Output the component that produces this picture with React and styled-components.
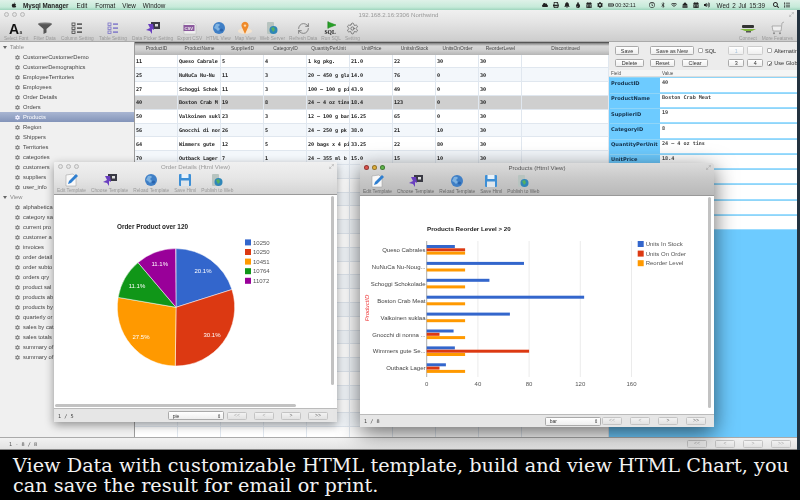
import React from 'react';
import styled, { createGlobalStyle } from 'styled-components';
import { FaCog, FaApple, FaBell, FaPrint, FaBluetoothB, FaWifi, FaEject, FaVolumeUp, FaSearch, FaList, FaRegClock, FaTint, FaCalendarAlt, FaBatteryFull, FaCloud } from 'react-icons/fa';
import { RefreshCw, Settings, Maximize2 } from 'lucide-react';

const GlobalStyle = createGlobalStyle`
  html, body { margin: 0; padding: 0; background: #000; }
  * { box-sizing: border-box; }
`;

const Screen = styled.div`
  width: 800px;
  height: 500px;
  overflow: hidden;
  display: flex;
  flex-direction: column;
  font-family: "Liberation Sans", Arial, sans-serif;
  position: relative;
`;

const MenuBar = styled.div`
  height: 10px;
  flex: none;
  display: flex;
  align-items: center;
  padding-left: 11px;
  font-size: 6.3px;
  color: #222;
  background: linear-gradient(#dff1e8, #c6ead9 70%, #9fd5bd);
  filter: blur(0.3px);
`;

const AppleMark = styled.span`
  display: flex;
  font-size: 6px;
  margin-right: 6px;
`;

const MenuItem = styled.span`
  margin-right: ${p => p.$gap}px;
  font-weight: ${p => (p.$bold ? 700 : 400)};
`;

const StatusArea = styled.div`
  margin-left: auto;
  display: flex;
  align-items: center;
  gap: 5px;
  padding-right: 10px;
  font-size: 6.3px;
  color: #222;
  svg { width: 6px; height: 6px; flex: none; }
`;

const ClockText = styled.span`
  margin-left: -4px;
  margin-right: 8px;
  font-size: 5.3px;
`;

const DateText = styled.span`
  margin: 0 3px 0 2px;
  word-spacing: 1px;
`;

const Desktop = styled.div`
  flex: none;
  height: 440px;
  position: relative;
  background: #23323f;
  filter: blur(0.3px);
`;

const MainWindow = styled.div`
  width: 797px;
  height: 440px;
  display: flex;
  flex-direction: column;
  background: #e8e8e8;
`;

const TitleBar = styled.div`
  height: 9px;
  flex: none;
  position: relative;
  display: flex;
  align-items: center;
  justify-content: center;
  font-size: 6.1px;
  color: ${p => (p.$active ? '#555' : '#999')};
`;

const Lights = styled.div`
  position: absolute;
  left: ${p => p.$left}px;
  top: 2px;
  display: flex;
  gap: 3px;
`;

const Light = styled.i`
  width: 5px;
  height: 5px;
  border-radius: 50%;
  background: ${p => p.$color || '#e4e4e4'};
  border: 0.5px solid ${p => (p.$color ? 'rgba(0,0,0,.35)' : '#b8b8b8')};
`;

const Resize = styled.span`
  position: absolute;
  right: 3px;
  top: 2px;
  display: flex;
  color: #9a9a9a;
`;

const TopChrome = styled.div`
  flex: none;
  height: 32px;
  background: linear-gradient(#f0f0f0, #e4e4e4 40%, #cdcdcd);
  border-bottom: 1px solid #aaa;
`;

const Toolbar = styled.div`
  height: 23px;
  display: flex;
  align-items: flex-end;
  gap: ${p => p.$gap}px;
  padding: 0 ${p => p.$pad}px 1px;
`;

const ToolItem = styled.div`
  display: flex;
  flex-direction: column;
  align-items: center;
  gap: 1px;
  margin-left: ${p => p.$ml || 0}px;
  font-size: 4.8px;
  white-space: nowrap;
  color: ${p => (p.$active ? '#666' : '#9a9a9a')};
  svg { display: block; }
`;

const ToolSpacer = styled.div`
  margin-left: auto;
`;

const Body = styled.div`
  flex: 1;
  min-height: 0;
  display: flex;
`;

const Sidebar = styled.div`
  width: 135px;
  flex: none;
  background: #f0f0f0;
  border-right: 1px solid #9c9c9c;
  font-size: 5.8px;
  color: #444;
`;

const TreeHead = styled.div`
  height: 10px;
  display: flex;
  align-items: center;
  padding-left: 3px;
  gap: 3px;
  color: #888;
  &::before {
    content: '';
    border-left: 2px solid transparent;
    border-right: 2px solid transparent;
    border-top: 3px solid #666;
  }
`;

const TreeRow = styled.div`
  height: 10px;
  display: flex;
  align-items: center;
  gap: 3px;
  padding-left: 15px;
  color: ${p => (p.$selected ? '#fff' : '#444')};
  background: ${p => (p.$selected ? 'linear-gradient(#a9b6d2, #8394b9)' : 'transparent')};
  svg { width: 5px; height: 5px; color: ${p => (p.$selected ? '#eef' : '#8a8a8a')}; }
`;

const Grid = styled.div`
  width: 474px;
  flex: none;
  overflow: hidden;
  background: #fff;
`;

const GridHead = styled.div`
  height: 12.6px;
  display: grid;
  grid-template-columns: repeat(9, 43px) 87px;
  border-top: 1px solid #555;
  background: linear-gradient(#7d7d7d, #d8d8d8 25%, #d0d0d0 60%, #b5b5b5);
  font-size: 4.9px;
  color: #444;
`;

const HeadCell = styled.div`
  display: flex;
  align-items: center;
  justify-content: center;
`;

const GridRow = styled.div`
  height: 13.8px;
  display: grid;
  grid-template-columns: repeat(9, 43px) 87px;
  background: ${p => (p.$selected ? '#cfcfcf' : p.$odd ? '#f3f7fb' : '#fff')};
  border-bottom: 1px solid #e0e7ef;
  font: 700 5.1px "DejaVu Sans Mono", monospace;
  letter-spacing: -0.08px;
  color: #222;
`;

const GridCell = styled.div`
  display: flex;
  align-items: center;
  padding-left: 1px;
  overflow: hidden;
  white-space: nowrap;
  border-right: 1px solid #e0e7ef;
`;

const EditPanel = styled.div`
  flex: 1;
  min-width: 0;
  display: flex;
  flex-direction: column;
  background: #6dcbff;
  overflow: hidden;
  padding-left: 1px;
`;

const ButtonBar = styled.div`
  height: 28.4px;
  flex: none;
  margin-left: -1px;
  background: #ececec;
  display: flex;
  padding: 4px 0 0 6px;
  white-space: nowrap;
`;

const ButtonGroup = styled.div`
  display: flex;
  flex-direction: column;
  gap: 3.5px;
`;

const ButtonRow = styled.div`
  display: flex;
  align-items: center;
  height: 9px;
`;

const PushButton = styled.div`
  width: ${p => p.$w}px;
  height: 8.5px;
  margin-left: ${p => p.$ml || 0}px;
  margin-right: ${p => p.$mr || 0}px;
  flex: none;
  display: flex;
  align-items: center;
  justify-content: center;
  border: 0.5px solid ${p => (p.$off ? '#ccc' : '#aaa')};
  border-radius: 1.5px;
  background: linear-gradient(#fff, #eee);
  font-size: 5.4px;
  color: ${p => (p.$off ? '#a9c4dd' : '#333')};
`;

const Check = styled.span`
  width: 5px;
  height: 5px;
  margin-left: ${p => p.$ml || 0}px;
  margin-right: 2px;
  flex: none;
  border: 0.5px solid #aaa;
  border-radius: 1px;
  background: #fff;
  position: relative;
  font-size: 6px;
  line-height: 4px;
  color: #222;
`;

const CheckLabel = styled.span`
  font-size: 5.6px;
  color: #333;
`;

const Divider = styled.div`
  width: 1px;
  height: 22px;
  margin: 0 7px 0 5px;
  background: #7ba6cc;
`;

const FieldHead = styled.div`
  height: 7px;
  flex: none;
  margin-left: -1px;
  display: flex;
  align-items: center;
  background: #f5f5f5;
  border-bottom: 1px solid #ddd;
  font-size: 4.6px;
  color: #555;
`;

const FieldTitle = styled.span`
  width: ${p => p.$w}px;
  padding-left: 2px;
`;

const FieldRow = styled.div`
  height: 15.3px;
  flex: none;
  display: flex;
  border-top: 0.5px solid #8fd5f8;
`;

const FieldName = styled.div`
  width: 50px;
  flex: none;
  padding: 1.6px 0 0 1px;
  font: 700 5.1px "DejaVu Sans", sans-serif;
  color: #14304a;
  white-space: nowrap;
`;

const FieldValue = styled.div`
  flex: 1;
  background: #fff;
  padding: 0.4px 0 0 2px;
  font: 700 5.1px "DejaVu Sans Mono", monospace;
  color: #444;
  border-bottom: 0.5px solid #9bdcff;
`;

const StatusBar = styled.div`
  flex: none;
  height: 13px;
  display: flex;
  align-items: center;
  padding: 0 6px 0 9px;
  background: linear-gradient(#f2f2f2, #e3e3e3);
  border-top: 1px solid #aaa;
  border-bottom: 1px solid #888;
  font: 5.2px "DejaVu Sans Mono", monospace;
  color: #555;
`;

const Pager = styled.div`
  margin-left: auto;
  display: flex;
  gap: ${p => p.$gap}px;
`;

const PageButton = styled.div`
  width: ${p => p.$w || 20}px;
  height: 8px;
  display: flex;
  align-items: center;
  justify-content: center;
  border: 0.5px solid #c4c4c4;
  border-radius: 1.5px;
  background: linear-gradient(#f2f2f2, #e2e2e2);
  font: 5px "Liberation Mono", monospace;
  color: ${p => (p.$on ? '#666' : '#aaa')};
`;

const FloatWindow = styled.div`
  position: absolute;
  left: ${p => p.$x}px;
  top: ${p => p.$y}px;
  width: ${p => p.$w}px;
  height: ${p => p.$h}px;
  display: flex;
  flex-direction: column;
  border-radius: 2px 2px 1px 1px;
  overflow: hidden;
  background: #fff;
  box-shadow: ${p => (p.$active ? '0 6px 22px rgba(0,0,0,.6)' : '0 3px 10px rgba(0,0,0,.4)')};
`;

const FloatChrome = styled.div`
  flex: none;
  height: 33px;
  background: ${p => (p.$active ? 'linear-gradient(#dcdcdc, #c8c8c8 50%, #b9b9b9)' : 'linear-gradient(#f0f0f0, #e6e6e6 50%, #d4d4d4)')};
  border-bottom: 0.5px solid #999;
`;

const ChartArea = styled.div`
  flex: 1;
  min-height: 0;
  position: relative;
  overflow: hidden;
  svg { display: block; }
`;

const ScrollV = styled.div`
  position: absolute;
  right: 3px;
  top: 1px;
  bottom: ${p => p.$bottom}px;
  width: 3px;
  border-radius: 2px;
  background: #c2c2c2;
`;

const ScrollH = styled.div`
  position: absolute;
  left: 1px;
  bottom: 1.5px;
  height: 3px;
  width: ${p => p.$w}px;
  border-radius: 2px;
  background: #c2c2c2;
`;

const FloatFooter = styled.div`
  flex: none;
  height: ${p => p.$h}px;
  display: flex;
  align-items: center;
  padding: 0 ${p => p.$pr}px 0 4px;
  background: #e6e6e6;
  border-top: 0.5px solid #bbb;
  font: 5.2px "DejaVu Sans Mono", monospace;
  color: #444;
`;

const SelectBox = styled.div`
  width: 56px;
  height: 9px;
  margin-left: ${p => p.$ml}px;
  display: flex;
  align-items: center;
  justify-content: space-between;
  padding: 0 2px 0 4px;
  border: 0.5px solid #aaa;
  border-radius: 1.5px;
  background: linear-gradient(#fff, #eee);
  font: 5px "Liberation Sans", sans-serif;
  color: #333;
`;

const Caption = styled.div`
  flex: none;
  height: 50px;
  background: #000;
  color: #f2f2f2;
  padding: 6px 0 0 13px;
  font: 19.25px/20px "DejaVu Serif", serif;
  white-space: pre;
`;

/* toolbar drawings, all on a 16 x 14 box */
const Ico = ({ children, w = 16, h = 14 }) => (
  <svg width={w} height={h} viewBox="0 0 16 14">{children}</svg>
);

const FontIcon = () => (
  <Ico>
    <text x="1" y="12.5" fontFamily="Liberation Sans" fontWeight="700" fontSize="14" fill="#111">A</text>
    <text x="11.4" y="12.5" fontFamily="Liberation Sans" fontWeight="700" fontSize="4.6" fill="#333">a</text>
  </Ico>
);
const FilterIcon = () => (
  <Ico>
    <ellipse cx="8" cy="3" rx="7" ry="1.6" fill="#777" />
    <path d="M1 3.2 L6.5 8 V13 L9.5 11.6 V8 L15 3.2 Z" fill="#555" />
  </Ico>
);
const ListIcon = ({ c }) => (
  <Ico>
    {[2, 6, 10].map(y => (
      <g key={y}>
        <rect x="3" y={y} width="3" height="2.4" fill="none" stroke={c} strokeWidth=".8" />
        <rect x="8" y={y + 0.4} width="5" height="1.4" fill={c} />
      </g>
    ))}
  </Ico>
);
const PickerIcon = () => (
  <Ico>
    <rect x="6" y="1" width="9" height="7" fill="#3a3a44" />
    <rect x="10" y="3" width="3" height="2.5" fill="#ddd" />
    <path d="M3 3 H8 L9 9 L7 8 L7 13 L5 10 L1 9 L5 7 Z" fill="#6a3fc0" />
  </Ico>
);
const CsvIcon = () => (
  <Ico>
    <path d="M2 2 H12 L14 4 V13 H2 Z" fill="#eee" stroke="#aaa" strokeWidth=".4" />
    <rect x="1.5" y="4" width="11" height="6" fill="#8c5a9e" />
    <text x="2.5" y="8.8" fontFamily="Liberation Sans" fontWeight="700" fontSize="4.2" fill="#eee">CSV</text>
  </Ico>
);
const GlobeIcon = () => (
  <Ico>
    <circle cx="8" cy="7" r="6" fill="#3f7fc6" />
    <path d="M5 3 Q8 2 9 4 L7 6 L9 8 L7 10 L5 8 L3 7 Z" fill="#7fb2e0" />
    <circle cx="10.5" cy="9" r="1.6" fill="#2a64ad" />
  </Ico>
);
const MapIcon = () => (
  <Ico>
    <ellipse cx="8" cy="10" rx="7" ry="3" fill="#f3e3cf" />
    <path d="M8 13 L4.8 6 A3.6 3.6 0 1 1 11.2 6 Z" fill="#ef8a2a" />
    <circle cx="8" cy="4.6" r="1.2" fill="#ffd9a8" />
  </Ico>
);
const ServerIcon = () => (
  <Ico>
    <rect x="3" y="1" width="7" height="12" rx="1" fill="#b8c4c0" />
    <circle cx="9.5" cy="9" r="4" fill="#2f86b8" />
    <path d="M7 7 L10 6 L11 9 L9 11 Z" fill="#55b060" />
  </Ico>
);
const RunIcon = () => (
  <Ico>
    <path d="M5 0 V8 M5 1 L13 4 L5 7 Z" fill="#27a127" stroke="#1e8c1e" strokeWidth=".6" />
    <text x="1.5" y="13" fontFamily="Liberation Serif" fontWeight="700" fontSize="5.6" fill="#111">SQL</text>
  </Ico>
);
const ConnectIcon = () => (
  <Ico>
    <rect x="2" y="4" width="12" height="3" rx="1" fill="#333" />
    <path d="M0 8 H16 L12 10 H5 Z" fill="#7fb63c" />
    <rect x="6" y="10" width="5" height="1.5" fill="#555" />
  </Ico>
);
const CartIcon = () => (
  <Ico>
    <path d="M15 1 L13 2 L12 10 H4 L3 5 H12" fill="#efefef" stroke="#888" strokeWidth=".6" />
    <circle cx="5" cy="12.2" r="1" fill="#888" />
    <circle cx="11" cy="12.2" r="1" fill="#888" />
  </Ico>
);
const EditIcon = () => (
  <Ico>
    <path d="M3 2 L10 1 L13 4 V13 H3 Z" fill="#f8f8f8" stroke="#999" strokeWidth=".5" />
    <path d="M5 11 L6 8 L13 1 L15 3 L8 10 Z" fill="#2f7fd0" />
  </Ico>
);
const SaveIcon = () => (
  <Ico>
    <rect x="2" y="1" width="12" height="12" rx="1" fill="#3d8fd6" />
    <rect x="4.5" y="1" width="7" height="4" fill="#e8f2fa" />
    <rect x="4" y="7.5" width="8" height="5.5" fill="#dfe6ec" />
  </Ico>
);

const mainTools = [
  ['Select Font', FontIcon, 0],
  ['Filter Data', FilterIcon, 1.3],
  ['Column Setting', () => <ListIcon c="#444" />, 1.3],
  ['Table Setting', () => <ListIcon c="#7a72c8" />, 1.3],
  ['Data Picker Setting', PickerIcon, 1.3],
  ['Export CSV', CsvIcon, 0],
  ['HTML View', GlobeIcon, 0],
  ['Map View', MapIcon, 0],
  ['Web Server', ServerIcon, 0],
  ['Refresh Data', () => <RefreshCw size={13} color="#777" strokeWidth={1.6} />, 0],
  ['Run SQL', RunIcon, 0],
  ['Setting', () => <Settings size={13} color="#555" strokeWidth={1.3} />, 0],
];

const templateTools = [
  ['Edit Template', EditIcon],
  ['Choose Template', PickerIcon],
  ['Reload Template', GlobeIcon],
  ['Save Html', SaveIcon],
  ['Publish to Web', ServerIcon],
];

const tables = ['CustomerCustomerDemo', 'CustomerDemographics', 'EmployeeTerritories', 'Employees', 'Order Details', 'Orders', 'Products', 'Region', 'Shippers', 'Territories', 'categories', 'customers', 'suppliers', 'user_info'];
const views = ['alphabetica', 'category sa', 'current pro', 'customer a', 'invoices', 'order detail', 'order subto', 'orders qry', 'product sal', 'products ab', 'products by', 'quarterly or', 'sales by cat', 'sales totals', 'summary of', 'summary of'];

const columns = ['ProductID', 'ProductName', 'SupplierID', 'CategoryID', 'QuantityPerUnit', 'UnitPrice', 'UnitsInStock', 'UnitsOnOrder', 'ReorderLevel', 'Discontinued'];
// cell text as far as the narrow columns show it
const products = [
  ['11', 'Queso Cabrale', '5', '4', '1 kg pkg.', '21.0', '22', '30', '30'],
  ['25', 'NuNuCa Nu-Nu', '11', '3', '20 – 450 g gla', '14.0', '76', '0', '30'],
  ['27', 'Schoggi Schok', '11', '3', '100 – 100 g pi', '43.9', '49', '0', '30'],
  ['40', 'Boston Crab M', '19', '8', '24 – 4 oz tins', '18.4', '123', '0', '30'],
  ['50', 'Valkoinen sukl', '23', '3', '12 – 100 g bar', '16.25', '65', '0', '30'],
  ['56', 'Gnocchi di nor', '26', '5', '24 – 250 g pk', '38.0', '21', '10', '30'],
  ['64', 'Wimmers gute', '12', '5', '20 bags x 4 pi', '33.25', '22', '80', '30'],
  ['70', 'Outback Lager', '7', '1', '24 – 355 ml b', '15.0', '15', '10', '30'],
];
const fields = [['ProductID', '40'], ['ProductName', 'Boston Crab Meat'], ['SupplierID', '19'], ['CategoryID', '8'], ['QuantityPerUnit', '24 – 4 oz tins'], ['UnitPrice', '18.4'], ['UnitsInStock', '123'], ['UnitsOnOrder', '0'], ['ReorderLevel', '30'], ['Discontinued', '']];

const pieSlices = [
  { pct: 20.1, color: '#3366cc', lx: 203, ly: 273 },
  { pct: 30.1, color: '#dc3912', lx: 212, ly: 336.5 },
  { pct: 27.5, color: '#ff9900', lx: 141, ly: 339 },
  { pct: 11.1, color: '#109618', lx: 137, ly: 288 },
  { pct: 11.1, color: '#990099', lx: 159.7, ly: 266 },
];
const pieLegend = ['10250', '10250', '10451', '10764', '11072'];

function slicePath(cx, cy, r, from, to) {
  const a = (from / 100) * 2 * Math.PI;
  const b = (to / 100) * 2 * Math.PI;
  const large = to - from > 50 ? 1 : 0;
  return `M${cx} ${cy} L${cx + r * Math.sin(a)} ${cy - r * Math.cos(a)} A${r} ${r} 0 ${large} 1 ${cx + r * Math.sin(b)} ${cy - r * Math.cos(b)} Z`;
}

const PieChart = () => {
  let at = 0;
  return (
    <svg width="283" height="213" viewBox="54 195 283 213" fontFamily="Liberation Sans">
      <text x="117" y="229" fontSize="6.4" fontWeight="700" fill="#222">Order Product over 120</text>
      {pieSlices.map(s => {
        const d = slicePath(176, 307.3, 58.7, at, at + s.pct);
        at += s.pct;
        return <path key={s.color} d={d} fill={s.color} stroke="#fff" strokeWidth=".5" />;
      })}
      {pieSlices.map(s => (
        <text key={s.color} x={s.lx} y={s.ly} fontSize="6" fill="#fff" textAnchor="middle">{s.pct}%</text>
      ))}
      {pieLegend.map((t, i) => (
        <g key={i}>
          <rect x="245" y={239.4 + i * 9.6} width="6" height="6" fill={pieSlices[i].color} />
          <text x="253" y={244.6 + i * 9.6} fontSize="6" fill="#555">{t}</text>
        </g>
      ))}
    </svg>
  );
};

const barData = [
  ['Queso Cabrales', 22, 30], ['NuNuCa Nu-Noug...', 76, 0], ['Schoggi Schokolade', 49, 0], ['Boston Crab Meat', 123, 0],
  ['Valkoinen suklaa', 65, 0], ['Gnocchi di nonna ...', 21, 10], ['Wimmers gute Se...', 22, 80], ['Outback Lager', 15, 10],
];

const BarChart = () => {
  const x0 = 426.7;
  const unit = 1.28;
  return (
    <svg width="354" height="218" viewBox="360 196 354 218" fontFamily="Liberation Sans">
      <text x="427" y="230.5" fontSize="6.2" fontWeight="700" fill="#222">Products Reorder Level &gt; 20</text>
      {[0, 40, 80, 120, 160].map(v => (
        <g key={v}>
          <line x1={x0 + v * unit} x2={x0 + v * unit} y1="241" y2="377" stroke={v ? '#e2e2e2' : '#888'} strokeWidth=".7" />
          <text x={x0 + v * unit} y="385.5" fontSize="6" fill="#555" textAnchor="middle">{v}</text>
        </g>
      ))}
      {barData.map(([name, stock, order], i) => {
        const c = 250 + i * 16.9;
        return (
          <g key={name}>
            <text x="425.5" y={c + 2} fontSize="6" fill="#444" textAnchor="end">{name}</text>
            <rect x={x0} y={c - 5} width={stock * unit} height="3" fill="#3366cc" />
            <rect x={x0} y={c - 1.7} width={order * unit} height="3" fill="#dc3912" />
            <rect x={x0} y={c + 1.6} width={30 * unit} height="3" fill="#ff9900" />
          </g>
        );
      })}
      <text transform="translate(369 308) rotate(-90)" fontSize="6" fontStyle="italic" fill="#e33" textAnchor="middle">ProductID</text>
      {['Units In Stock', 'Units On Order', 'Reorder Level'].map((t, i) => (
        <g key={t}>
          <rect x="637.7" y={241 + i * 9.6} width="6" height="6" fill={['#3366cc', '#dc3912', '#ff9900'][i]} />
          <text x="645.7" y={246.2 + i * 9.6} fontSize="6" fill="#555">{t}</text>
        </g>
      ))}
    </svg>
  );
};

const ChartWindow = ({ title, active, x, y, w, h, footH, page, kind, selectMl, children, vBottom, hWidth, gap, pr }) => (
  <FloatWindow $x={x} $y={y} $w={w} $h={h} $active={active}>
    <FloatChrome $active={active}>
      <TitleBar $active={active}>
        <Lights $left={4}>
          <Light $color={active ? '#e0544c' : undefined} />
          <Light $color={active ? '#e2b13c' : undefined} />
          <Light $color={active ? '#62b84c' : undefined} />
        </Lights>
        {title}
        <Resize><Maximize2 size={5} /></Resize>
      </TitleBar>
      <Toolbar $gap={5} $pad={3}>
        {templateTools.map(([label, Icon]) => (
          <ToolItem key={label} $active={active}><Icon />{label}</ToolItem>
        ))}
      </Toolbar>
    </FloatChrome>
    <ChartArea>
      {children}
      <ScrollV $bottom={vBottom} />
      {hWidth ? <ScrollH $w={hWidth} /> : null}
    </ChartArea>
    <FloatFooter $h={footH} $pr={pr}>
      {page}
      <SelectBox $ml={selectMl}>{kind}<span>⇕</span></SelectBox>
      <Pager $gap={gap}>
        <PageButton>&lt;&lt;</PageButton>
        <PageButton>&lt;</PageButton>
        <PageButton $on>&gt;</PageButton>
        <PageButton $on>&gt;&gt;</PageButton>
      </Pager>
    </FloatFooter>
  </FloatWindow>
);

const App = () => {
  const blankRows = Array.from({ length: 21 }, (_, i) => i);
  return (
    <Screen>
      <GlobalStyle />
      <MenuBar>
        <AppleMark><FaApple /></AppleMark>
        <MenuItem $gap={8} $bold>Mysql Manager</MenuItem>
        <MenuItem $gap={8}>Edit</MenuItem>
        <MenuItem $gap={7}>Format</MenuItem>
        <MenuItem $gap={7}>View</MenuItem>
        <MenuItem $gap={7}>Window</MenuItem>
        <StatusArea>
          <FaCloud /><FaPrint /><FaBell /><FaTint /><FaCalendarAlt /><FaCog />
          <FaBatteryFull />
          <ClockText>00:32:11</ClockText>
          <FaRegClock /><FaBluetoothB /><FaWifi /><FaEject /><FaCalendarAlt /><FaVolumeUp />
          <DateText>Wed 2 Jul  15:39</DateText>
          <FaSearch /><FaList />
        </StatusArea>
      </MenuBar>
      <Desktop>
        <MainWindow>
          <TopChrome>
            <TitleBar>
              <Lights $left={4}><Light /><Light /><Light /></Lights>
              192.168.2.16:3306 Northwind
              <Resize><Maximize2 size={5} /></Resize>
            </TitleBar>
            <Toolbar $gap={4} $pad={4}>
              {mainTools.map(([label, Icon, ml]) => (
                <ToolItem key={label} $ml={ml}><Icon />{label}</ToolItem>
              ))}
              <ToolSpacer />
              <ToolItem><ConnectIcon />Connect</ToolItem>
              <ToolItem $ml={1}><CartIcon />More Features</ToolItem>
            </Toolbar>
          </TopChrome>
          <Body>
            <Sidebar>
              <TreeHead>Table</TreeHead>
              {tables.map(t => (
                <TreeRow key={t} $selected={t === 'Products'}><FaCog />{t}</TreeRow>
              ))}
              <TreeHead>View</TreeHead>
              {views.map((t, i) => (
                <TreeRow key={i}><FaCog />{t}</TreeRow>
              ))}
            </Sidebar>
            <Grid>
              <GridHead>
                {columns.map(c => <HeadCell key={c}>{c}</HeadCell>)}
              </GridHead>
              {products.map((row, i) => (
                <GridRow key={row[0]} $odd={i % 2 === 1} $selected={row[0] === '40'}>
                  {row.map((v, j) => <GridCell key={j}>{v}</GridCell>)}
                  <GridCell />
                </GridRow>
              ))}
              {blankRows.map(i => (
                <GridRow key={i} $odd={i % 2 === 0}>
                  {columns.map(c => <GridCell key={c} />)}
                </GridRow>
              ))}
            </Grid>
            <EditPanel>
              <ButtonBar>
                <ButtonGroup>
                  <ButtonRow>
                    <PushButton $w={24}>Save</PushButton>
                    <PushButton $w={44} $ml={11}>Save as New</PushButton>
                    <Check $ml={4} />
                    <CheckLabel>SQL</CheckLabel>
                  </ButtonRow>
                  <ButtonRow>
                    <PushButton $w={29}>Delete</PushButton>
                    <PushButton $w={25} $ml={6}>Reset</PushButton>
                    <PushButton $w={26} $ml={7}>Clear</PushButton>
                  </ButtonRow>
                </ButtonGroup>
                <Divider />
                <ButtonGroup>
                  <ButtonRow>
                    <PushButton $w={16} $mr={3} $off>1</PushButton>
                    <PushButton $w={16} $mr={4} $off />
                    <Check />
                    <CheckLabel>Alternatin</CheckLabel>
                  </ButtonRow>
                  <ButtonRow>
                    <PushButton $w={16} $mr={3}>3</PushButton>
                    <PushButton $w={16} $mr={4}>4</PushButton>
                    <Check>✓</Check>
                    <CheckLabel>Use Glob</CheckLabel>
                  </ButtonRow>
                </ButtonGroup>
              </ButtonBar>
              <FieldHead>
                <FieldTitle $w={51}>Field</FieldTitle>
                <FieldTitle $w={60}>Value</FieldTitle>
              </FieldHead>
              {fields.map(([name, value]) => (
                <FieldRow key={name}>
                  <FieldName>{name}</FieldName>
                  <FieldValue>{value}</FieldValue>
                </FieldRow>
              ))}
            </EditPanel>
          </Body>
          <StatusBar>
            1 - 8 / 8
            <Pager $gap={8}>
              <PageButton>&lt;&lt;</PageButton>
              <PageButton>&lt;</PageButton>
              <PageButton>&gt;</PageButton>
              <PageButton>&gt;&gt;</PageButton>
            </Pager>
          </StatusBar>
        </MainWindow>

        <ChartWindow title="Order Details (Html View)" x={54} y={152} w={283} h={260} footH={14} page="1 / 5" kind="pie" selectMl={94} vBottom={23} hWidth={241} gap={7} pr={9}>
          <PieChart />
        </ChartWindow>
        <ChartWindow title="Products (Html View)" active x={360} y={153} w={354} h={264} footH={13} page="1 / 8" kind="bar" selectMl={165} vBottom={6} gap={8} pr={8}>
          <BarChart />
        </ChartWindow>
      </Desktop>
      <Caption>{'View Data with customizable HTML template, build and view HTML Chart, you\ncan save the result for email or print.'}</Caption>
    </Screen>
  );
};

export default App;
